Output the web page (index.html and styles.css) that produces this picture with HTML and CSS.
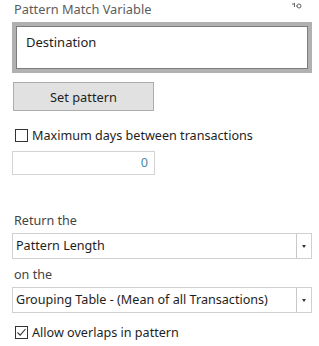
FILE: index.html
```html
<!DOCTYPE html>
<html>
<head>
<meta charset="utf-8">
<link rel="stylesheet" href="styles.css">
</head>
<body>
<div class="panel">
  <div class="header">
    <span class="title">Pattern Match Variable</span>
    <svg class="pin" width="12" height="8" viewBox="0 0 12 8"><path d="M1 2 L3 2 M3.5 1 L3.5 5" stroke="#666" stroke-width="1" fill="none"/><circle cx="8" cy="4" r="2" stroke="#666" stroke-width="1" fill="none"/><path d="M5 4 H6" stroke="#666"/></svg>
  </div>
  <div class="dest"><span>Destination</span></div>
  <button class="btn">Set pattern</button>
  <label class="check">
    <span class="box"></span>
    <span>Maximum days between transactions</span>
  </label>
  <div class="num">0</div>
  <div class="label first">Return the</div>
  <div class="select"><span class="val">Pattern Length</span><span class="arrow"></span></div>
  <div class="label">on the</div>
  <div class="select"><span class="val">Grouping Table - (Mean of all Transactions)</span><span class="arrow"></span></div>
  <label class="check last">
    <span class="box checked"><svg width="11" height="11" viewBox="0 0 11 11"><path d="M1.5 5.5 L4.2 8.2 L9.5 2" stroke="#333" stroke-width="1.1" fill="none"/></svg></span>
    <span>Allow overlaps in pattern</span>
  </label>
</div>
</body>
</html>
```

FILE: styles.css
```css
* { box-sizing: border-box; }
html, body { margin: 0; padding: 0; background: #fff; }
body { font-family: "Noto Sans", "Open Sans", sans-serif; font-size: 12.6px; color: #222; }
.panel { width: 319px; height: 346px; padding: 0 7px 0 12px; display: flex; flex-direction: column; align-items: flex-start; }
.header { width: 100%; height: 22px; display: flex; justify-content: space-between; align-items: flex-start; }
.title { color: #5c5c5c; padding-left: 2px; line-height: 19px; font-size: 12.8px; }
.pin { margin-top: 2px; margin-right: 9px; }
.dest { width: 300px; height: 51px; border: 4px solid #b1b1b1; box-shadow: inset 0 0 0 1px #7c7c7c; padding: 7px 0 0 10px; line-height: 18px; font-size: 13px; color: #1e1e1e; }
.btn { margin: 9px 0 0 1px; width: 141px; height: 29px; background: #e1e1e1; border: 1px solid #adadad; font-family: inherit; font-size: 12.8px; color: #1e1e1e; padding: 0; }
.check { display: flex; align-items: center; gap: 4px; margin: 15px 0 0 3px; height: 18px; color: #1e1e1e; }
.box { width: 13px; height: 13px; border: 1px solid #333; background: #fff; display: flex; align-items: center; justify-content: center; }
.box svg { display: block; }
.num { margin-top: 7px; width: 143px; height: 24px; border: 1px solid #d3d3d3; text-align: right; padding-right: 6px; line-height: 22px; color: #4a8aa8; }
.label { color: #444; line-height: 18px; height: 18px; padding-left: 2px; margin-top: 7px; }
.label.first { margin-top: 37px; }
.select { margin-top: 3px; width: 300px; height: 26px; border: 1px solid #d0d0d0; display: flex; align-items: stretch; color: #1e1e1e; }
.select .val { flex: 1; padding-left: 3px; line-height: 24px; white-space: nowrap; overflow: hidden; }
.select .arrow { width: 15px; border-left: 1px solid #c8c8c8; position: relative; }
.select .arrow::after { content: ""; position: absolute; left: 5px; top: 11px; border-left: 2.5px solid transparent; border-right: 2.5px solid transparent; border-top: 3px solid #333; }
.check.last { margin-top: 10px; }
```
